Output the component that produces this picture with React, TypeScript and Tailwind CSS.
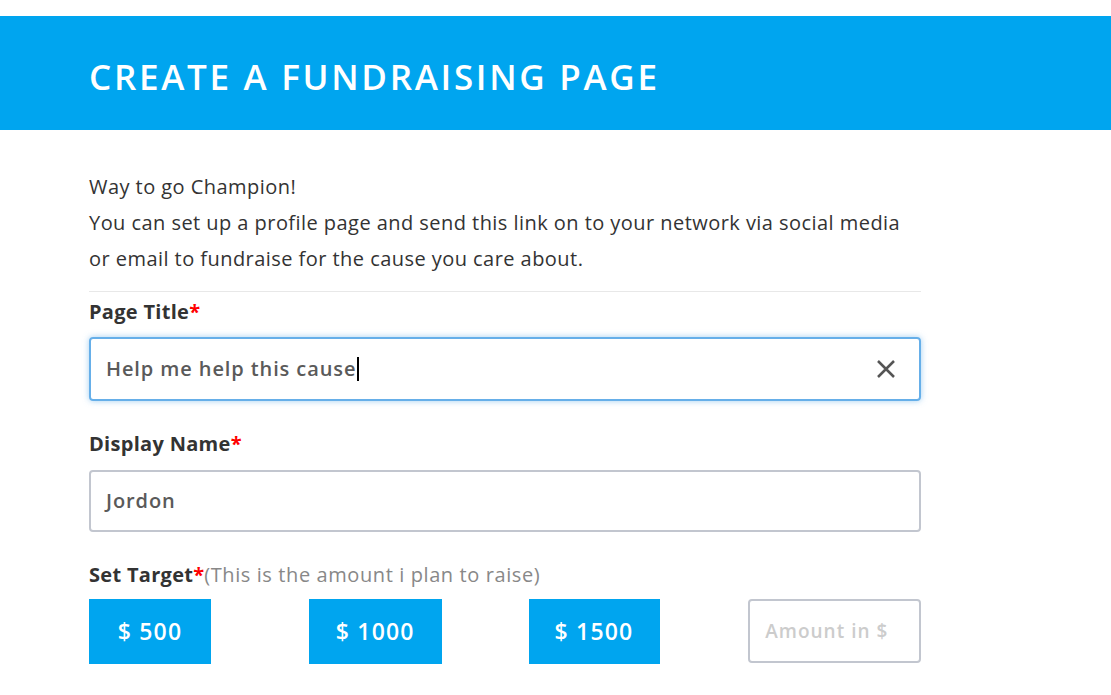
import React from "react";

export default function App() {
  return (
    <div className="w-[1111px] h-[695px] overflow-hidden bg-white" style={{ fontFamily: '"Open Sans", sans-serif' }}>
      <div className="h-4" />
      <div className="h-[114px] bg-[#00a5ef] flex items-center pl-[89px]">
        <h1 className="text-white text-[35px] font-semibold tracking-[2.7px] leading-none pt-[6px]">CREATE A FUNDRAISING PAGE</h1>
      </div>
      <div className="w-[832px] ml-[89px] pt-[39px]">
        <div className="text-[20px] leading-[36px] text-[#333] tracking-[0.45px]">
          <p>Way to go Champion!</p>
          <p>You can set up a profile page and send this link on to your network via social media or email to fundraise for the cause you care about.</p>
        </div>
        <div className="mt-[14px] border-t border-[#e8e8e8]" />
        <label className="block mt-[6px] text-[20px] font-bold text-[#333] leading-[28px] tracking-[0.3px]">
          Page Title<span className="text-[#ff0000]">*</span>
        </label>
        <div className="mt-[11px] h-[64px] rounded-[4px] border-2 border-[#66afe9] shadow-[0_0_6px_rgba(102,175,233,0.6)] flex items-center px-[15px]">
          <span className="text-[20px] font-semibold text-[#5a5a5a] tracking-[0.9px]">Help me help this cause</span>
          <span className="w-[1.5px] h-[24px] bg-black ml-[1px]" />
          <div className="flex-1" />
          <svg width="20" height="20" viewBox="0 0 20 20" className="mr-[8px]">
            <path d="M2 2 L18 18 M18 2 L2 18" stroke="#555" strokeWidth="2.5" strokeLinecap="butt" />
          </svg>
        </div>
        <label className="block mt-[29px] text-[20px] font-bold text-[#333] leading-[28px] tracking-[0.3px]">
          Display Name<span className="text-[#ff0000]">*</span>
        </label>
        <div className="mt-[12px] h-[62px] rounded-[4px] border-2 border-[#c2c6cf] flex items-center px-[15px]">
          <span className="text-[20px] font-semibold text-[#5a5a5a] tracking-[0.9px]">Jordon</span>
        </div>
        <div className="mt-[29px] text-[20px] leading-[28px]">
          <span className="font-bold text-[#333] tracking-[0.3px]">Set Target</span>
          <span className="font-bold text-[#ff0000]">*</span>
          <span className="text-[#888] tracking-[0.6px]">(This is the amount i plan to raise)</span>
        </div>
        <div className="mt-[10px] grid grid-cols-4 gap-x-[47px] items-start">
          <div><button className="h-[65px] w-[122px] bg-[#00a5ef] text-white text-[23px] font-semibold tracking-[1.2px]">$ 500</button></div>
          <div><button className="h-[65px] w-[133px] bg-[#00a5ef] text-white text-[23px] font-semibold tracking-[1.2px]">$ 1000</button></div>
          <div><button className="h-[65px] w-[131px] bg-[#00a5ef] text-white text-[23px] font-semibold tracking-[1.2px]">$ 1500</button></div>
          <div className="h-[64px] rounded-[4px] border-2 border-[#c2c6cf] flex items-center px-[15px]">
            <span className="text-[19px] font-semibold text-[#cccccc] tracking-[1px]">Amount in $</span>
          </div>
        </div>
      </div>
    </div>
  );
}
